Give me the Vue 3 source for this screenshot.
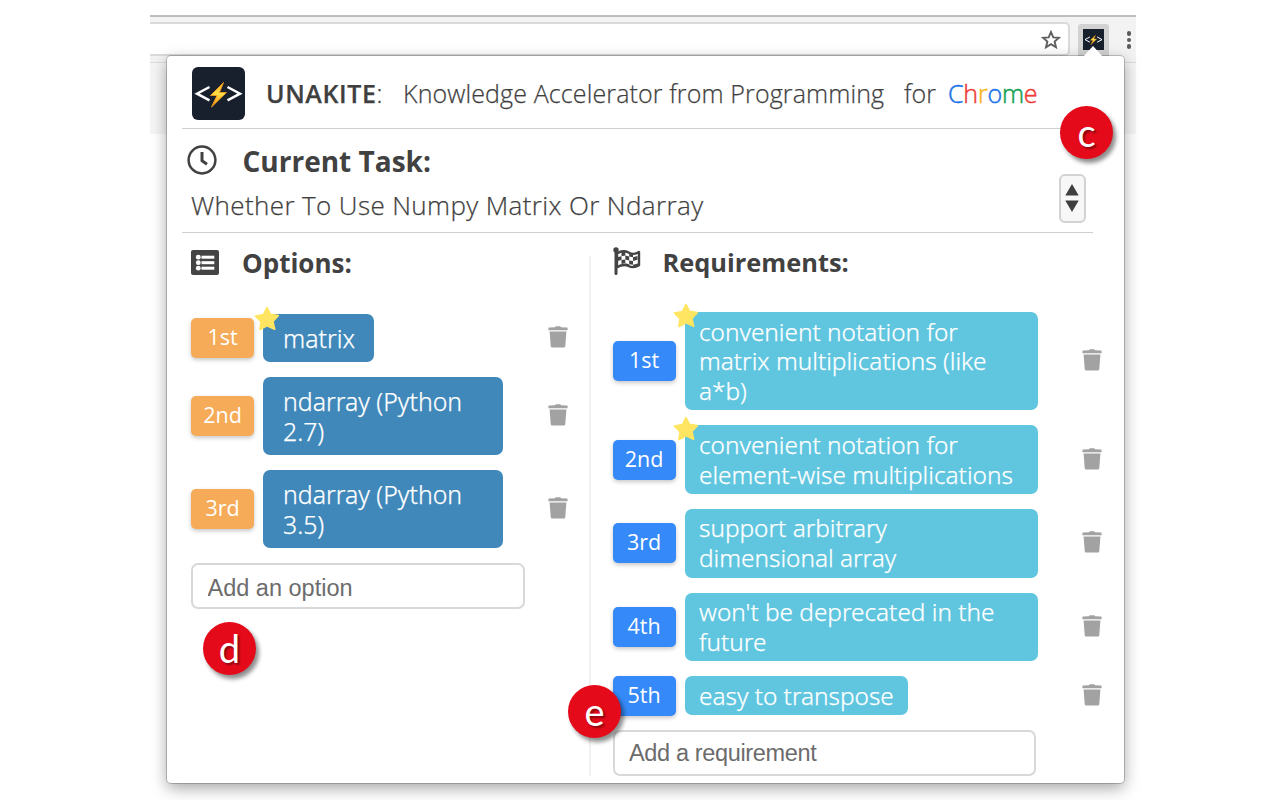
<script setup>
const options = [
  { rank: '1st', lines: ['matrix'], star: true },
  { rank: '2nd', lines: ['ndarray (Python', '2.7)'] },
  { rank: '3rd', lines: ['ndarray (Python', '3.5)'] },
]
const requirements = [
  { rank: '1st', lines: ['convenient notation for', 'matrix multiplications (like', 'a*b)'], star: true },
  { rank: '2nd', lines: ['convenient notation for', 'element-wise multiplications'], star: true },
  { rank: '3rd', lines: ['support arbitrary', 'dimensional array'] },
  { rank: '4th', lines: ["won't be deprecated in the", 'future'] },
  { rank: '5th', lines: ['easy to transpose'] },
]
const brand = [
  ['C', 'blue'], ['h', 'red'], ['r', 'yellow'], ['o', 'blue'], ['m', 'green'], ['e', 'red'],
]
</script>

<template>
  <svg class="defs" width="0" height="0" aria-hidden="true">
    <defs>
      <linearGradient id="boltFill" x1="0" y1="0" x2="0" y2="1">
        <stop offset="0" stop-color="#f9a61a" />
        <stop offset=".45" stop-color="#ffe04a" />
        <stop offset="1" stop-color="#f08c10" />
      </linearGradient>
      <symbol id="logo" viewBox="0 0 53 53">
        <path d="M17.5 20 5 26.7 17.5 33.4M35.5 20 48 26.7 35.5 33.4" fill="none" stroke="#fff" stroke-width="2.5" />
        <path d="M31.5 15.5 18.5 28.5H25L19.5 40 34.5 25.5H27.5Z" fill="url(#boltFill)" stroke="#ee9a1c" stroke-width=".9" />
      </symbol>
      <symbol id="trash" viewBox="0 0 20 22">
        <path d="M7 1.2Q7.3.3 8 .3H12Q12.7.3 13 1.2L19 1.6Q19.6 1.6 19.6 2.4V4.2H.4V2.4Q.4 1.6 1 1.6ZM1.6 5.6H18.4L17.3 20Q17.2 21.6 15.8 21.6H4.2Q2.8 21.6 2.7 20Z" />
      </symbol>
      <symbol id="star" viewBox="0 0 26 25">
        <path d="M13 1.6 16.4 8.4 24.2 9.6 18.8 15.3 20.6 23.2 13 19.8 6 23.4 7.1 15.5 1.6 10.2 9.5 8.6Z" stroke-width="1.8" stroke-linejoin="round" />
      </symbol>
    </defs>
  </svg>

  <div class="stage">
    <div class="browser">
      <div class="toolbar">
        <div class="omnibox">
          <svg class="bookmark" viewBox="0 0 20 20"><path d="M10 2 12.3 7.4 18 7.8 13.6 11.5 15 17.2 10 14.2 5 17.2 6.4 11.5 2 7.8 7.7 7.4Z" /></svg>
        </div>
        <div class="extension"><div class="tile"><svg><use href="#logo" /></svg></div></div>
        <div class="dots"><i></i><i></i><i></i></div>
      </div>
      <div class="page"></div>
    </div>

    <main class="popup">
      <svg class="arrow" viewBox="0 0 20 11"><path d="M0 11 10 0 20 11Z" /></svg>
      <header class="head">
        <div class="logo"><svg><use href="#logo" /></svg></div>
        <span class="name"><b>UNAKITE</b>:</span>
        <span class="tagline">Knowledge Accelerator from Programming</span>
        <span class="for">for</span>
        <span class="chrome"><span v-for="([ch, tone], i) in brand" :key="i" :class="tone">{{ ch }}</span></span>
      </header>

      <section class="task">
        <div class="title">
          <svg class="clock" viewBox="0 0 30 30"><circle cx="15" cy="15" r="13.4" /><path d="M15 7V15.8L20 19.2" /></svg>
          <h2>Current Task:</h2>
        </div>
        <p>Whether To Use Numpy Matrix Or Ndarray</p>
        <div class="stepper">
          <svg viewBox="0 0 14 30"><path d="M7 1 13.7 12.5H.3ZM7 29 .3 17.5H13.7Z" /></svg>
        </div>
      </section>

      <div class="columns">
        <section class="col options">
          <div class="title">
            <svg class="list" viewBox="0 0 28 25">
              <rect width="28" height="25" rx="2" fill="#444" />
              <g fill="#fff"><circle cx="7.3" cy="7.2" r="2.4" /><circle cx="7.3" cy="12.7" r="2.4" /><circle cx="7.3" cy="18.2" r="2.4" />
                <rect x="10.5" y="5.7" width="12.8" height="3" /><rect x="10.5" y="11.2" width="12.8" height="3" /><rect x="10.5" y="16.7" width="12.8" height="3" /></g>
            </svg>
            <h2>Options:</h2>
          </div>
          <div v-for="o in options" :key="o.rank" class="row">
            <span class="rank">{{ o.rank }}</span>
            <div class="chip">
              <svg v-if="o.star" class="star"><use href="#star" /></svg>
              <span v-for="l in o.lines" :key="l">{{ l }}</span>
            </div>
            <svg class="trash"><use href="#trash" /></svg>
          </div>
          <input placeholder="Add an option" />
        </section>

        <div class="divider"></div>

        <section class="col requirements">
          <div class="title">
            <svg class="flag" viewBox="0 0 28 28">
              <path d="M3 4.5V26.5" stroke="#444" stroke-width="3" stroke-linecap="round" />
              <circle cx="3" cy="3" r="2.7" fill="#444" />
              <path d="M4 6.4Q10 2.5 15.5 5.5T26 5V18.3Q20.5 21.5 15.5 19T4 20.3Z" fill="#fff" stroke="#444" stroke-width="2.4" stroke-linejoin="round" />
              <path d="M8.5 5.2 12.3 4.7V8.6L8.5 9.2ZM16.2 6 20 6.5V10.2L16.2 9.6ZM12.3 8.6 16.2 9.6V13.4L12.3 12.4ZM20 10.2 24.5 9V12.8L20 14ZM5 10 8.5 9.2V13L5 13.8ZM8.5 13 12.3 12.4V16.2L8.5 16.9ZM16.2 13.4 20 14V17.8L16.2 17.2ZM12.3 16.2 16.2 17.2V19.5L12.3 18.5ZM20 17.8 25 16.6V18.5L20 20Z" fill="#444" />
            </svg>
            <h2>Requirements:</h2>
          </div>
          <div v-for="r in requirements" :key="r.rank" class="row">
            <span class="rank">{{ r.rank }}</span>
            <div class="chip">
              <svg v-if="r.star" class="star"><use href="#star" /></svg>
              <span v-for="l in r.lines" :key="l">{{ l }}</span>
            </div>
            <svg class="trash"><use href="#trash" /></svg>
          </div>
          <input placeholder="Add a requirement" />
        </section>
      </div>
    </main>

    <div class="marker c"><span>c</span></div>
    <div class="marker d"><span>d</span></div>
    <div class="marker e"><span>e</span></div>
  </div>
</template>

<style>
body { background: #fff; overflow: hidden; }
</style>

<style scoped>
* { box-sizing: border-box; }
.defs { position: absolute; }
.stage { position: relative; width: 1280px; height: 800px; overflow: hidden; font-family: "Open Sans", "Noto Sans", sans-serif; color: #3f3f3f; }
.browser { margin-left: 150px; width: 986px; height: 800px; padding-top: 15px; overflow: hidden; }
.toolbar { display: flex; height: 48px; background: #f3f3f3; border-top: 2px solid #bdbdbd; border-bottom: 1px solid #ddd; }
.omnibox { width: 920px; height: 34px; margin-top: 5px; background: #fff; border: 2px solid #dadada; border-left: 0; border-radius: 0 5px 5px 0; display: flex; justify-content: flex-end; padding: 6px 7px 0 0; }
.bookmark { width: 20px; height: 20px; fill: none; stroke: #606060; stroke-width: 1.9; }
.extension { margin: 7px 0 0 8px; width: 31px; height: 36px; border-radius: 3px; background: #d2d2d2; padding: 5px; }
.tile { width: 21px; height: 21px; background: #181f2d; }
.tile svg { width: 21px; height: 21px; display: block; }
.dots { display: flex; flex-direction: column; gap: 2px; margin: 14px 0 0 17.5px; }
.dots i { width: 4.5px; height: 4.5px; border-radius: 50%; background: #5a5a5a; }
.page { height: 71px; background: #f5f5f5; }

.popup { position: absolute; left: 166.5px; top: 56px; width: 957.5px; height: 727px; background: #fff; border-radius: 4px; padding: 0 15px; box-shadow: 0 0 0 1px rgba(0,0,0,.2), 0 5px 16px rgba(0,0,0,.36); }
.arrow { position: absolute; left: 916.5px; top: -10px; width: 20px; height: 11px; fill: #fff; }
.head { display: flex; align-items: center; height: 73px; width: 911px; padding: 3px 0 0 10.5px; border-bottom: 1px solid #cfcfcf; font-size: 25px; font-weight: 300; white-space: nowrap; -webkit-text-stroke: .25px; }
.head > * { flex: none; }
.head > span { margin-top: -1px; }
.logo { width: 53px; height: 53px; border-radius: 6px; background: #181f2d; }
.logo svg { width: 53px; height: 53px; display: block; }
.name { width: 158px; padding-left: 21px; font-size: 25px; }
.name b { font-weight: 600; letter-spacing: .6px; }
.tagline { width: 501px; letter-spacing: .12px; }
.for { width: 44px; }
.chrome { letter-spacing: -.2px; -webkit-text-stroke: .5px; }
.blue { color: #1a73e8; } .red { color: #ee3b37; } .yellow { color: #f9b522; } .green { color: #12a150; }

.task { position: relative; height: 104px; width: 911px; border-bottom: 1px solid #cfcfcf; padding: 13px 0 0 9.5px; }
.title { display: flex; align-items: center; }
h2 { margin: 0; font-weight: 700; font-size: 28px; line-height: 38px; white-space: nowrap; color: #414141; }
.task .title { gap: 26px; margin-left: -4.5px; }
.clock { width: 30px; height: 30px; margin-top: -2px; fill: none; stroke: #414141; stroke-width: 2.5; }
.clock path { stroke-width: 3; }
.task p { margin: 7px 0 0; font-size: 26px; font-weight: 300; line-height: 36px; white-space: nowrap; letter-spacing: .38px; -webkit-text-stroke: .25px; }
.stepper { position: absolute; right: 7px; top: 45px; width: 27px; height: 49px; border: 2px solid #d2d2d2; border-radius: 6px; background: #f7f7f7; display: grid; place-items: center; }
.stepper svg { width: 14px; height: 30px; margin-top: -2px; fill: #3f3f3f; }

.columns { display: grid; grid-template-columns: 407px 2px 1fr; height: 514px; margin-top: 23px; }
.divider { background: #f1f1f1; }
.col { padding-left: 9.5px; }
.requirements { padding-left: 22px; }
.col .title { height: 16px; }
.options .title { margin-bottom: 42px; gap: 23px; }
.requirements .title { margin-bottom: 40px; gap: 22px; }
.list { width: 28px; height: 25px; margin-top: -3px; }
.flag { width: 28px; height: 28px; margin-top: -6px; }
.col h2 { font-size: 26px; margin-top: -2px; }
.requirements h2 { margin-top: -4px; font-size: 25.4px; }
.row { display: grid; align-items: center; margin-bottom: 15px; }
.options .row { grid-template-columns: 63px 276px 20px; column-gap: 9px; }
.requirements .row { grid-template-columns: 63px 388px 20px; column-gap: 9px; }
.rank { height: 40px; border-radius: 5px; color: #fff; font-size: 21.5px; line-height: 38px; text-align: center; font-weight: 500; box-shadow: 0 2px 4px rgba(0,0,0,.22); }
.options .rank { background: #f5ab57; }
.requirements .rank { background: #3589f8; }
.chip { position: relative; justify-self: start; border-radius: 7px; color: #fff; font-family: "Noto Sans", sans-serif; font-weight: 300; font-size: 24.8px; line-height: 30px; white-space: nowrap; -webkit-text-stroke: .25px; }
.chip span { display: block; }
.options .chip { background: #4088ba; padding: 9px 20px; }
.requirements .chip { background: #60c6df; padding: 4.5px 14.5px; font-size: 24.35px; line-height: 29.8px; }
.options .row:nth-child(2) .chip { width: 110.5px; }
.requirements .row:nth-child(6) .chip { width: 223px; align-self: start; }
.options .row:not(:nth-child(2)) .chip { width: 240px; }
.requirements .row:not(:nth-child(6)) .chip { width: 353px; }
.star { position: absolute; left: -9.5px; top: -8px; width: 26px; height: 25px; fill: #ffe562; stroke: #ffe562; }
.requirements .star { left: -11.5px; top: -9px; }
.trash { width: 20px; height: 22px; fill: #a2a2a2; margin-top: -2px; }
input { display: block; height: 46px; border: 2px solid #d8d8d8; border-radius: 7px; padding: 4px 14.5px 0; font: 23.5px "Liberation Sans", sans-serif; background: #fff; outline: 0; }
input::placeholder { color: #6c6c6c; opacity: 1; }
.options input { width: 334px; }
.requirements input { width: 423px; letter-spacing: -.35px; padding-top: 1px; margin-top: -1px; }

.marker { position: absolute; width: 53px; height: 53px; border-radius: 50%; background: #e50a1a; color: #fff; box-shadow: 3px 4px 4px rgba(0,0,0,.45); font: 38px/53px Lato, sans-serif; text-align: center; text-shadow: 2px 2px 2px rgba(0,0,0,.4); }
.c { left: 1060px; top: 106px; }
.d { left: 203px; top: 622px; }
.e { left: 568px; top: 685px; }
</style>
